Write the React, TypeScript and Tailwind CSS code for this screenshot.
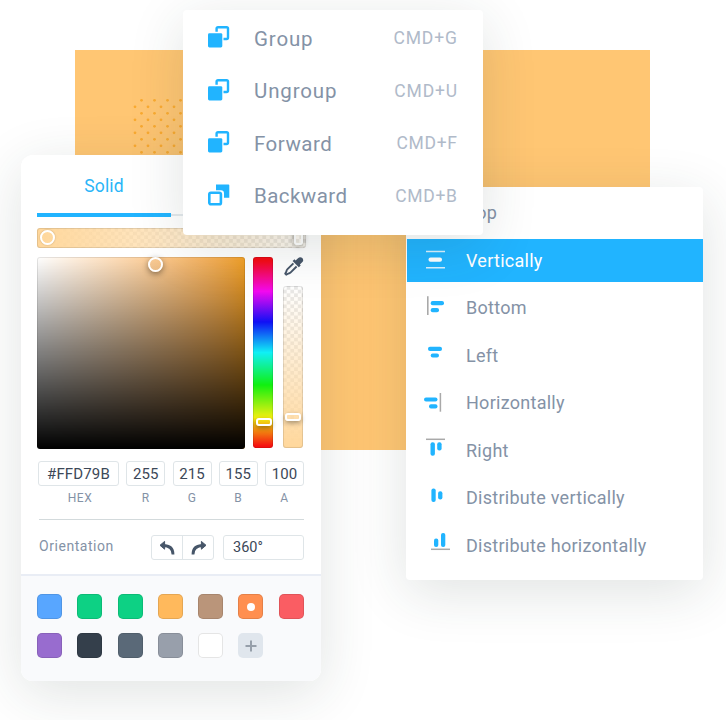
import type { ReactNode } from 'react';

const CHECKER =
  'bg-[repeating-conic-gradient(#e9e9e9_0_25%,#ffffff_0_50%)] bg-[length:7.4px_7.4px]';

const PANEL_SHADOW = 'shadow-[0_12px_55px_rgba(35,60,50,0.14)]';

function StackIcon({ back }: { back?: boolean }) {
  return (
    <svg className="size-[22px]" viewBox="0 0 22 22" fill="none">
      {back ? (
        <>
          <path d="M8 .5h12.5q.8 0 .8.8v12.5h-5.3V9.2q0-3-3-3H8z" fill="#21b4ff" />
          <rect x="1.3" y="8.7" width="11.6" height="11.6" rx="1.6" stroke="#21b4ff" strokeWidth="2.6" />
        </>
      ) : (
        <>
          <rect x="0" y="7.2" width="14.3" height="14.3" rx="1.4" fill="#21b4ff" />
          <path d="M8.6 5.8V2.6q0-1.4 1.4-1.4h8.6q1.4 0 1.4 1.4v9q0 1.4-1.4 1.4h-3.1" stroke="#21b4ff" strokeWidth="2.4" />
        </>
      )}
    </svg>
  );
}

const commands = [
  { label: 'Group', key: 'CMD+G', spacing: 'tracking-[0.85px]', keySpacing: 'tracking-[0.9px] -mr-[0.9px]' },
  { label: 'Ungroup', key: 'CMD+U', spacing: 'tracking-[0.85px]', keySpacing: 'tracking-[0.8px] -mr-[0.8px]' },
  { label: 'Forward', key: 'CMD+F', spacing: 'tracking-[0.5px]', keySpacing: 'tracking-[0.7px] -mr-[0.7px]' },
  { label: 'Backward', key: 'CMD+B', spacing: 'tracking-[0.45px]', keySpacing: 'tracking-[0.7px] -mr-[0.7px]', back: true },
];

function CommandMenu() {
  return (
    <div className={`absolute left-[183px] top-[10px] h-[225px] w-[300px] rounded-[4px] bg-white pt-[2px] ${PANEL_SHADOW}`}>
      {commands.map((c) => (
        <div key={c.label} className="flex h-[52.5px] items-center pl-[25px] pr-[26px]">
          <div className="-mt-[2px]">
            <StackIcon back={c.back} />
          </div>
          <span className={`ml-[24px] pt-px text-[20.5px] leading-none text-[#8492a6] ${c.spacing}`}>{c.label}</span>
          <span className={`ml-auto pt-px text-[17.5px] leading-none text-[#b0bac9] ${c.keySpacing}`}>{c.key}</span>
        </div>
      ))}
    </div>
  );
}

function Pill({ x, y, w, h, fill = '#21b4ff' }: { x: number; y: number; w: number; h: number; fill?: string }) {
  return <rect x={x} y={y} width={w} height={h} rx={Math.min(w, h, 4) / 2} fill={fill} />;
}

const alignments: { label: string; icon: ReactNode; active?: boolean }[] = [
  { label: 'Top', icon: null },
  {
    label: 'Vertically',
    active: true,
    icon: (
      <>
        <path d="M3 3.5h19M3 19.8h19" stroke="#d7f1ff" strokeWidth="1.5" />
        <Pill x={5.5} y={9.6} w={13.5} h={4.2} fill="#fff" />
      </>
    ),
  },
  {
    label: 'Bottom',
    icon: (
      <>
        <path d="M4.8.3V19" stroke="#a9a9a9" strokeWidth="1.6" />
        <Pill x={7.7} y={5} w={13.3} h={4.2} />
        <Pill x={7.7} y={12} w={8.3} h={4.2} />
      </>
    ),
  },
  {
    label: 'Left',
    icon: (
      <>
        <Pill x={5} y={3.7} w={14} h={4.2} />
        <Pill x={7.7} y={10.4} w={8.3} h={4.2} />
      </>
    ),
  },
  {
    label: 'Horizontally',
    icon: (
      <>
        <Pill x={1} y={6.4} w={13.5} h={4.2} />
        <Pill x={6} y={13.3} w={8.5} h={4.2} />
        <path d="M17.4 2v18.7" stroke="#a9a9a9" strokeWidth="1.5" />
      </>
    ),
  },
  {
    label: 'Right',
    icon: (
      <>
        <path d="M3 1.3h19" stroke="#a9a9a9" strokeWidth="1.5" />
        <Pill x={7.5} y={4.2} w={4.4} h={13.5} />
        <Pill x={14.2} y={4.2} w={4.4} h={8.3} />
      </>
    ),
  },
  {
    label: 'Distribute vertically',
    icon: (
      <>
        <Pill x={8.4} y={2.5} w={4.3} h={13.5} />
        <Pill x={15.1} y={5.2} w={4.3} h={8.3} />
      </>
    ),
  },
  {
    label: 'Distribute horizontally',
    icon: (
      <>
        <Pill x={11} y={5.4} w={4.3} h={8.5} />
        <Pill x={18} y={0} w={4.3} h={13.9} />
        <path d="M8 16.3h19" stroke="#a9a9a9" strokeWidth="1.5" />
      </>
    ),
  },
];

function AlignMenu() {
  return (
    <div className={`absolute left-[406px] top-[187px] h-[393px] w-[297px] rounded-[4px] bg-white pl-px pt-[2px] ${PANEL_SHADOW}`}>
      {alignments.map((a) => (
        <div key={a.label} className="flex h-[47.5px] items-center">
          <div className={`flex h-[43px] w-full items-center pl-[16px] ${a.active ? 'bg-[#21b4ff] text-white' : 'text-[#8492a6]'}`}>
            <svg className="h-[24px] w-[30px]" viewBox="0 0 30 24" fill="none">
              {a.icon}
            </svg>
            <span className="ml-[13px] pt-px text-[18px] leading-none tracking-[0.27px]">{a.label}</span>
          </div>
        </div>
      ))}
    </div>
  );
}

function Field({ value, label, width, shift = '' }: { value: string; label: string; width: string; shift?: string }) {
  return (
    <div className={`flex flex-col items-center ${width}`}>
      <div className="flex h-[25px] w-full items-center justify-center rounded-[3px] border border-[#dfe5e8] pt-px text-[15px] tracking-[0.15px] text-[#3c4858]">
        {value}
      </div>
      <span className={`mt-[6px] text-[12px] leading-[12px] tracking-[0.5px] text-[#8492a6] ${shift}`}>{label}</span>
    </div>
  );
}

const swatches = [
  'bg-[#58a6ff]', 'bg-[#0dd184]', 'bg-[#0dd184]', 'bg-[#ffb95c]', 'bg-[#ba957a]', 'bg-[#ff8f50]', 'bg-[#fa5d63]',
  'bg-[#986ccf]', 'bg-[#343f4b]', 'bg-[#5a6978]', 'bg-[#989fab]', 'bg-white',
];

function ColorPanel() {
  return (
    <div className="absolute left-[21px] top-[155px] flex h-[526px] w-[300px] flex-col overflow-hidden rounded-[12px] bg-white">
      <div className="ml-[16px] flex h-[62px] w-[268px] items-end">
        <div className="flex h-full w-[134px] items-center justify-center border-b-4 border-[#21b4ff] pt-[5px] text-[17.5px] tracking-[0.1px] text-[#2ab5f8]">
          Solid
        </div>
        <div className="mb-px h-[2px] flex-1 bg-[#e4e9ed]" />
      </div>

      <div className={`relative ml-[16px] mt-[11px] h-[20px] w-[269px] rounded-[3px] ${CHECKER}`}>
        <div className="h-full rounded-[3px] border border-black/10 bg-linear-to-r from-[#ffd79b] to-[#ffd79b]/10 bg-origin-border" />
        <div className="absolute left-[3px] top-[2px] size-[15px] rounded-full border-[2.5px] border-white shadow-[0_0_2px_rgba(0,0,0,0.25)]" />
        <div className="absolute right-[3px] top-[2px] h-[15px] w-[9px] rounded-[3px] border-[2.5px] border-white shadow-[0_0_6px_rgba(0,0,0,0.4)]" />
      </div>

      <div className="ml-[16px] mt-[9px] flex h-[192px]">
        <div className="relative h-[192px] w-[208px] rounded-[3px] bg-linear-to-r from-white to-[#f7a324]">
          <div className="h-full rounded-[3px] border border-black/10 bg-linear-to-b from-black/0 to-black bg-origin-border" />
          <div className="absolute left-[111px] top-0 size-[15px] rounded-full border-[2.5px] border-white shadow-[0_2px_6px_rgba(0,0,0,0.45)]" />
        </div>
        <div className="relative ml-[8px] h-[191px] w-[20px] rounded-[3px] border border-black/10 bg-[linear-gradient(#f50a14_2%,#f30af0_18%,#1010f5_34%,#10f0f5_50%,#10f010_67%,#f0f010_84%,#f51010_99%)] bg-origin-border">
          <div className="absolute left-[1.5px] top-[160px] h-[8px] w-[16px] rounded-[3px] border-[2.5px] border-white shadow-[0_2px_5px_rgba(0,0,0,0.35)]" />
        </div>
        <div className="ml-[10px] flex w-[20px] flex-col">
          <svg className="ml-px h-[20px] w-[20px]" viewBox="0 0 20 20" fill="none">
            <path d="M9.4 6.3 3.5 12.2Q2.4 13.3 2.4 14.5L1.2 16.7l1 1 2.3-1.2q1.2-.1 2.2-1.1l5.9-5.9" stroke="#475669" strokeWidth="1.9" strokeLinejoin="round" />
            <path d="M11.6 3.6 14 1.2c2.8-2.8 7 1 4.4 3.9l-2.5 2.3.8 1-1.9 1.9-6.2-6.2 1.9-1.9z" fill="#475669" />
          </svg>
          <div className={`relative mt-[9px] h-[162px] rounded-[3px] ${CHECKER}`}>
            <div className="h-full rounded-[3px] border border-black/10 bg-linear-to-b from-[#ffd79b]/0 to-[#ffd79b] bg-origin-border" />
            <div className="absolute left-[2px] top-[127px] h-[8px] w-[16px] rounded-[3px] border-[2.5px] border-white shadow-[0_2px_5px_rgba(0,0,0,0.35)]" />
          </div>
        </div>
      </div>

      <div className="ml-[17px] mt-[12px] flex w-[266px] justify-between">
        <Field value="#FFD79B" label="HEX" width="w-[81px]" shift="pl-[3px]" />
        <Field value="255" label="R" width="w-[39px]" />
        <Field value="215" label="G" width="w-[39px]" />
        <Field value="155" label="B" width="w-[39px]" />
        <Field value="100" label="A" width="w-[39px]" />
      </div>

      <div className="ml-[18px] mt-[15px] h-px w-[265px] shrink-0 bg-[#d3dadc]" />

      <div className="ml-[17px] mt-[15px] flex h-[25px] w-[266px] items-center">
        <span className="-mt-[3px] w-[114px] pl-px text-[14px] tracking-[0.55px] text-[#8492a6]">Orientation</span>
        <div className="-ml-px flex h-full w-[63px] rounded-[3px] border border-[#dfe5e8]">
          <div className="flex w-[31px] items-center justify-center border-r border-[#dfe5e8]">
            <svg className="h-[16px] w-[17px]" viewBox="0 0 17 16" fill="none">
              <path d="M4 5.5c6.5 0 10 2.5 10 9" stroke="#475669" strokeWidth="2.8" />
              <path d="M1 5.3 5.6 1.4v7.8z" fill="#475669" stroke="#475669" strokeLinejoin="round" />
            </svg>
          </div>
          <div className="flex flex-1 items-center justify-center">
            <svg className="h-[16px] w-[17px] -scale-x-100" viewBox="0 0 17 16" fill="none">
              <path d="M4 5.5c6.5 0 10 2.5 10 9" stroke="#475669" strokeWidth="2.8" />
              <path d="M1 5.3 5.6 1.4v7.8z" fill="#475669" stroke="#475669" strokeLinejoin="round" />
            </svg>
          </div>
        </div>
        <div className="ml-auto flex h-full w-[81px] items-center rounded-[3px] border border-[#dfe5e8] pl-[9px] pt-px text-[14.5px] text-[#3c4858]">
          360°
        </div>
      </div>

      <div className="mt-[14px] flex-1 border-t-2 border-[#e9edf5] bg-[#f9fafc] pl-[16px] pt-[18px]">
        <div className="grid grid-cols-[repeat(7,25px)] gap-x-[15.3px] gap-y-[14px]">
          {swatches.map((s, i) => (
            <div key={i} className={`flex size-[25px] items-center justify-center rounded-[5px] border border-black/10 ${s}`}>
              {i === 5 && <div className="size-[8px] rounded-full bg-white" />}
            </div>
          ))}
          <div className="flex size-[25px] items-center justify-center rounded-[5px] bg-[#e0e6ed]">
            <svg className="size-[12px]" viewBox="0 0 12 12">
              <path d="M6 .5v11M.5 6h11" stroke="#969faa" strokeWidth="2" />
            </svg>
          </div>
        </div>
      </div>
    </div>
  );
}

export default function App() {
  return (
    <div className="relative h-[720px] w-[726px] overflow-hidden bg-white font-['Roboto','Liberation_Sans',sans-serif]">
      <div className="absolute left-[74.5px] top-[50px] h-[400px] w-[575px] bg-[#ffc673]">
        <svg className="absolute left-[58.5px] top-[48px] h-[60px] w-[60px]" viewBox="0 0 60 60">
          <defs>
            <pattern id="dots" width="13" height="13" patternUnits="userSpaceOnUse">
              <circle cx="2" cy="8.8" r="1.4" fill="#faaa30" />
              <circle cx="8.5" cy="2.3" r="1.4" fill="#faaa30" />
            </pattern>
          </defs>
          <rect width="60" height="60" fill="url(#dots)" />
        </svg>
      </div>
      <div className={`absolute left-[21px] top-[155px] h-[526px] w-[300px] rounded-[12px] ${PANEL_SHADOW}`} />
      <ColorPanel />
      <AlignMenu />
      <CommandMenu />
    </div>
  );
}
